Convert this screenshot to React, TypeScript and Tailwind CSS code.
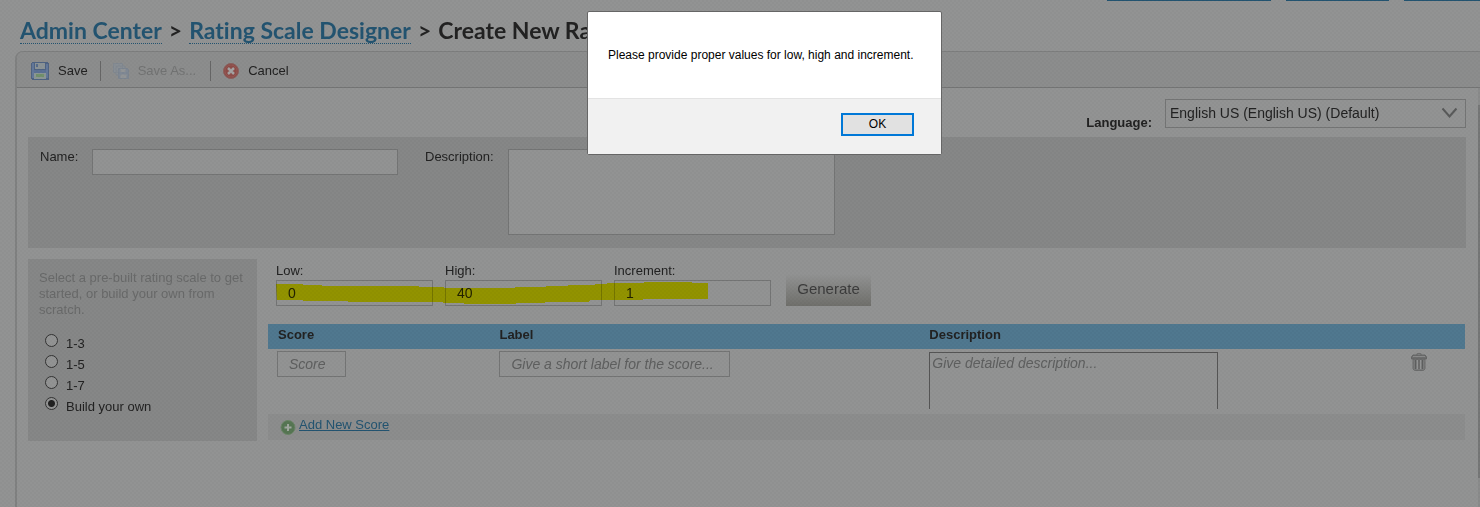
import React, { useState } from 'react';

const SCALES = [
    { id: '1-3', label: '1-3' },
    { id: '1-5', label: '1-5' },
    { id: '1-7', label: '1-7' },
    { id: 'custom', label: 'Build your own' },
];

const RANGE_FIELDS = [
    { id: 'low', label: 'Low:', value: '0' },
    { id: 'high', label: 'High:', value: '40' },
    { id: 'increment', label: 'Increment:', value: '1' },
];

const fieldClass = 'block border border-[#747575] bg-[#929393] text-[#222] outline-none rounded-none';

function SaveIcon() {
    return (
        <svg width="18" height="18" viewBox="0 0 18 18" shapeRendering="crispEdges" aria-hidden="true">
            <path d="M1 0h15l2 2v15l-1 1H1l-1-1V1z" fill="#4f6382" />
            <path d="M1 1h2v15H1zM15 2h2v14h-2z" fill="#63789a" />
            <path d="M4 1h10v6H4z" fill="#8b9396" />
            <path d="M5 2h2v3H5z" fill="#566b8a" />
            <path d="M3 8h12v3H3z" fill="#5a7094" />
            <path d="M3 11h12v6H3z" fill="#8b9694" />
            <path d="M5 12h8v3H5z" fill="#72906c" />
        </svg>
    );
}

function SaveAsIcon() {
    return (
        <svg width="16" height="16" viewBox="0 0 16 16" aria-hidden="true">
            <path d="M.5.500h9v9h-9zM3 3h9v9H3z" fill="#898f95" stroke="#818890" />
            <path d="M5.500 5.500h9l1 1v9h-10z" fill="#7f8894" stroke="#7c8590" />
            <path d="M7.500 6h5v3h-5zM7.500 11.500h6V15h-6z" fill="#919496" />
        </svg>
    );
}

function CancelIcon() {
    return (
        <svg width="16" height="16" viewBox="0 0 16 16" aria-hidden="true">
            <circle cx="8" cy="8" r="7.500" fill="#8c4c48" stroke="#8b5f5c" />
            <circle cx="8" cy="8" r="6" fill="none" stroke="#965854" />
            <path d="M5 5l6 6M11 5l-6 6" stroke="#a3a1a1" strokeWidth="2.500" />
        </svg>
    );
}

function AddIcon() {
    return (
        <svg width="16" height="15" viewBox="0 0 16 15" aria-hidden="true">
            <circle cx="8" cy="7.500" r="7" fill="#567653" stroke="#6b8567" />
            <path d="M8 4v7M4.500 7.500h7" stroke="#a0a79f" strokeWidth="2" />
        </svg>
    );
}

function TrashIcon() {
    return (
        <svg width="16" height="18" viewBox="0 0 16 18" aria-hidden="true">
            <path d="M6 2V.500h4V2" fill="none" stroke="#707171" />
            <path d="M2 2h12l1.500 2v2H.5V4z" fill="#6e6f6f" stroke="#656666" />
            <path d="M2 3.500h12" stroke="#8a8b8b" />
            <path d="M2 6.500h12V16l-1.500 1.500h-9L2 16z" fill="#7a7b7b" stroke="#6c6d6d" />
            <path d="M4.500 7v9M8 7v9M11.500 7v9" stroke="#5e5f5f" />
            <path d="M6.500 7v9M9.500 7v9" stroke="#939494" />
        </svg>
    );
}

function Highlighter() {
    return (
        <svg width="434" height="26" viewBox="276 280 434 26" aria-hidden="true">
            <path
                d="M276 284h27v1h19v1h97v1h25v1h71v-1h31v-1h22v-1h27v-1h12v-1h37v-1h48v1h16v16h-65v1h-53v1h-1v1h-44v1h-29v1h-52v-1h-21v-1h-95v-1h-45v-1h-26z"
                fill="#ffff00"
            />
        </svg>
    );
}

function Toolbar() {
    return (
        <div className="flex items-center h-[37px] pt-[3px] pl-[14px] border-y border-t-[#7d7e7e] border-b-[#747575] bg-[#8c8d8d] rounded-tl-md">
            <button className="flex items-center gap-[9px]">
                <SaveIcon />
                Save
            </button>
            <span className="w-px h-5 mx-3 bg-[#666]" />
            <button disabled className="flex items-center gap-[9px] text-[#727373]">
                <SaveAsIcon />
                Save As...
            </button>
            <span className="w-px h-5 ml-[14px] mr-3 bg-[#666]" />
            <button className="flex items-center gap-[9px]">
                <CancelIcon />
                Cancel
            </button>
        </div>
    );
}

function AlertDialog({ onClose }: { onClose: () => void }) {
    return (
        <div role="alertdialog" aria-describedby="alert-message" className="fixed left-[587px] top-[11px] w-[355px] border border-[#666] rounded-xs bg-white text-black text-[12px]">
            <p id="alert-message" className="h-[86px] pl-5 flex items-center whitespace-nowrap">
                Please provide proper values for low, high and increment.
            </p>
            <div className="flex justify-end h-14 pt-[14px] pr-[27px] border-t border-[#e3e3e3] bg-[#f1f1f1]">
                <button onClick={onClose} className="w-[73px] h-[23px] pb-px border-2 border-[#0078d7] bg-[#e1e1e1] leading-4">
                    OK
                </button>
            </div>
        </div>
    );
}

export default function App() {
    const [scale, setScale] = useState('custom');
    const [alertOpen, setAlertOpen] = useState(true);

    return (
        <div className="min-h-screen flex flex-col bg-[#929393] text-[#222] text-[13px] leading-4 font-['Liberation_Sans',Arial,sans-serif] overflow-hidden">

            {/* Bottom edge of the top links */}
            <div className="flex justify-end gap-[15px] h-px" aria-hidden="true">
                <span className="w-[164px] bg-[#235471]" />
                <span className="w-[103px] bg-[#235471]" />
                <span className="w-[76px] bg-[#235471]" />
            </div>

            {/* Breadcrumb */}
            <h1 className="flex gap-[7px] h-[50px] pt-[15px] pl-5 font-['Trebuchet_MS',Lato,sans-serif] font-bold text-[23px] leading-7 whitespace-nowrap [font-variant-ligatures:none]">
                <a href="#admin" className="h-7 text-[#235471] border-b border-dotted border-[#235471]">Admin Center</a>
                <span>&gt;</span>
                <a href="#designer" className="h-7 text-[#235471] border-b border-dotted border-[#235471]">Rating Scale Designer</a>
                <span>&gt;</span>
                <span>Create New Rating Scale</span>
            </h1>

            <div className="flex-1 flex flex-col ml-[15px] border-l-2 border-[#808181] rounded-tl-lg">
                <Toolbar />

                <div className="flex-1 flex">
                    <main className="flex-1 min-w-0 pl-[11px] pr-3 pt-[11px]">

                        {/* Language */}
                        <div className="flex justify-end gap-[13px] mb-[6px]">
                            <label htmlFor="language" className="pt-4 font-bold">Language:</label>
                            <div className="relative w-[301px]">
                                <select id="language" className={`${fieldClass} appearance-none w-full h-[29px] pl-1 pb-px text-[14px]`}>
                                    <option>English US (English US) (Default)</option>
                                </select>
                                <svg className="absolute right-2 top-2 pointer-events-none" width="17" height="12" viewBox="0 0 17 12" aria-hidden="true">
                                    <path d="M1.500 1.500l7 8 7-8" fill="none" stroke="#595a5a" strokeWidth="2" />
                                </svg>
                            </div>
                        </div>

                        {/* Name and description */}
                        <div className="flex items-start h-[111px] pt-3 pl-3 bg-[#868787]">
                            <label htmlFor="name" className="w-[52px]">Name:</label>
                            <input id="name" type="text" className={`${fieldClass} w-[306px] h-[26px] mr-[27px] px-3`} />
                            <label htmlFor="description" className="w-[83px]">Description:</label>
                            <textarea id="description" className={`${fieldClass} w-[327px] h-[86px] px-1 resize-none`} />
                        </div>

                        <div className="flex items-start gap-[11px] mt-[11px] pr-px">

                            {/* Pre-built scales */}
                            <fieldset className="w-[229px] h-[182px] shrink-0 pt-[11px] pl-[11px] pr-2 bg-[#868787]">
                                <p className="mb-4 text-[#696a6a]">
                                    Select a pre-built rating scale to get started, or build your own from scratch.
                                </p>
                                {SCALES.map(item => (
                                    <label key={item.id} className="flex items-start gap-2 h-[21px] pl-[6px]">
                                        <input
                                            type="radio"
                                            name="scale"
                                            checked={scale === item.id}
                                            onChange={() => setScale(item.id)}
                                            className="appearance-none size-[13px] rounded-full border border-[#333] bg-[#929393] checked:bg-[radial-gradient(circle,#222_3px,#929393_4px)]"
                                        />
                                        <span className="pt-[2px]">{item.label}</span>
                                    </label>
                                ))}
                            </fieldset>

                            <div className="flex-1 min-w-0">
                                {/* Range */}
                                <div className="flex items-end pl-2 pt-1">
                                    <div className="relative flex gap-3">
                                        {RANGE_FIELDS.map(field => (
                                            <div key={field.id} className="w-[157px]">
                                                <label htmlFor={field.id} className="block h-[17px]">{field.label}</label>
                                                <input id={field.id} type="text" defaultValue={field.value} className={`${fieldClass} w-full h-[26px] px-[11px] text-[14px]`} />
                                            </div>
                                        ))}
                                        <div className="absolute left-0 top-[17px] mix-blend-multiply pointer-events-none">
                                            <Highlighter />
                                        </div>
                                    </div>
                                    <button className="w-[85px] h-8 ml-[15px] pb-[2px] bg-linear-to-b from-[#929393] to-[#70706c] text-[#3c3c3c] text-[15px] leading-4">
                                        Generate
                                    </button>
                                </div>

                                {/* Scores */}
                                <table className="w-full mt-[18px] table-fixed border-collapse">
                                    <thead>
                                        <tr className="h-[25px] bg-[#50788f] text-left align-top">
                                            <th className="w-[18.5%] pl-[10px] pt-[3px] font-bold">Score</th>
                                            <th className="w-[36%] pl-[10px] pt-[3px] font-bold">Label</th>
                                            <th className="w-[40%] pl-[9px] pt-[3px] font-bold">Description</th>
                                            <th />
                                        </tr>
                                    </thead>
                                    <tbody>
                                        <tr className="h-[65px] align-top">
                                            <td className="pl-[9px] pt-[2px]">
                                                <input type="text" aria-label="Score" placeholder="Score" className={`${fieldClass} w-[69px] h-[26px] px-[11px] italic text-[14px] placeholder:text-[#5e5f5f]`} />
                                            </td>
                                            <td className="pl-[10px] pt-[2px]">
                                                <input type="text" aria-label="Label" placeholder="Give a short label for the score..." className={`${fieldClass} w-[231px] h-[26px] px-[11px] italic text-[14px] placeholder:text-[#5e5f5f]`} />
                                            </td>
                                            <td className="pl-[9px] pt-[3px]">
                                                <textarea aria-label="Description" placeholder="Give detailed description..." className="block w-[289px] h-[57px] px-[2px] pt-[2px] border border-b-0 border-[#555] bg-[#929393] italic text-[14px] resize-none outline-none placeholder:text-[#5e5f5f]" />
                                            </td>
                                            <td className="pl-3 pt-1">
                                                <button aria-label="Delete" className="block"><TrashIcon /></button>
                                            </td>
                                        </tr>
                                    </tbody>
                                </table>
                                <div className="flex items-center gap-[3px] h-[26px] pl-3 bg-[#8c8d8d]">
                                    <AddIcon />
                                    <a href="#add" className="pb-1 underline text-[#235471]">Add New Score</a>
                                </div>
                            </div>
                        </div>
                    </main>

                    {/* Scrollbar */}
                    <div className="w-[2px] pt-[17px] bg-[#8a8b8b]">
                        <div className="h-[373px] bg-[#767777]" />
                    </div>
                </div>
            </div>

            {/* Shade over the page */}
            {alertOpen && (
                <div className="fixed inset-0 pointer-events-none opacity-2 bg-[repeating-conic-gradient(#000_0_25%,transparent_0_50%)] bg-size-[4px_4px]" />
            )}
            {alertOpen && <AlertDialog onClose={() => setAlertOpen(false)} />}
        </div>
    );
}
